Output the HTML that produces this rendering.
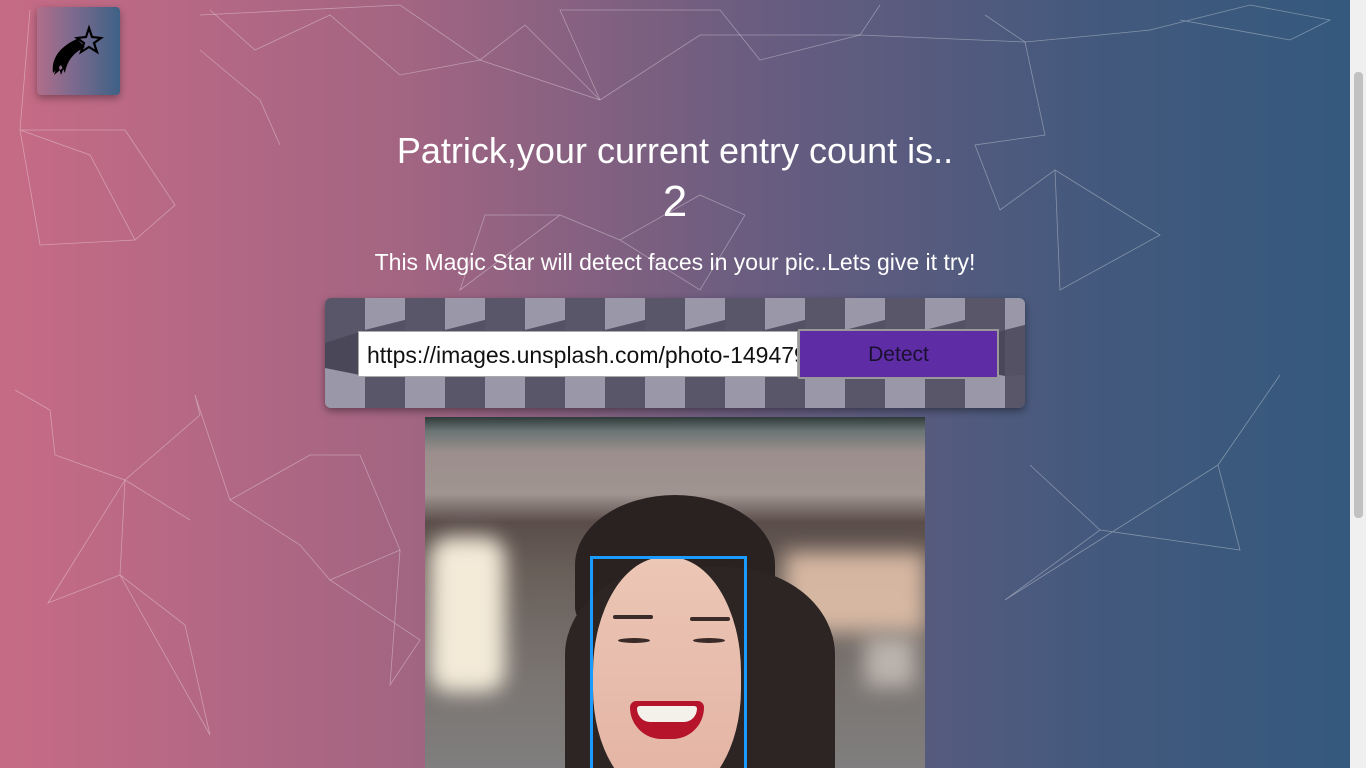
<!DOCTYPE html>
<html><head><meta charset="utf-8"><style>
html,body{margin:0;padding:0;width:1366px;height:768px;overflow:hidden}
body{background:linear-gradient(90deg,#c66b86 0%,#a26582 30%,#6a5d80 55%,#43597d 80%,#33597d 100%);font-family:"Liberation Sans",sans-serif;position:relative}
.sb{position:absolute;right:0;top:0;width:16px;height:768px;background:#f0f0f0}
.sb div{position:absolute;left:4px;top:72px;width:9px;height:446px;background:#c1c1c1;border-radius:4px}
.logo{position:absolute;left:37px;top:7px;width:83px;height:88px;border-radius:4px;background:linear-gradient(90deg,#b06e8a,#7b6a8e 45%,#3e6186);box-shadow:0 3px 8px rgba(0,0,0,.35)}
h1{position:absolute;left:0;width:1350px;text-align:center;top:130px;margin:0;font-weight:normal;color:#fff;font-size:36px;font-family:"Liberation Sans",sans-serif}
.n{position:absolute;left:0;width:1350px;text-align:center;top:177px;color:#fff;font-size:44px;font-family:"Liberation Sans",sans-serif}
.p{position:absolute;left:0;width:1350px;text-align:center;top:249px;color:#fff;font-size:23px;font-family:"Liberation Sans",sans-serif}
.panel{position:absolute;left:325px;top:298px;width:700px;height:110px;border-radius:6px;overflow:hidden;box-shadow:0 3px 8px rgba(0,0,0,.4)}
.inp{position:absolute;left:358px;top:331px;width:430px;height:44px;background:#fff;border:1px solid #aaa;font-size:23px;line-height:46px;padding-left:8px;color:#111;font-family:"Liberation Sans",sans-serif;white-space:nowrap;overflow:hidden}
.btn{position:absolute;left:798px;top:329px;width:197px;height:46px;background:#5e2ca5;border:2px solid #999;text-align:center;line-height:48px;font-size:21px;color:#1a1030;font-family:"Liberation Sans",sans-serif}
.img{position:absolute;left:425px;top:417px;width:500px;height:351px;overflow:hidden;background:linear-gradient(180deg,#2f3a3a 0%,#6a7574 4%,#9b8e8c 10%,#a09490 22%,#5a4d4a 30%,#6a605a 45%,#7a7572 75%,#807e7e 100%)}
.b{position:absolute;filter:blur(10px)}
.box{position:absolute;left:590px;top:556px;width:151px;height:212px;border:3px solid #1a9cff}
</style></head><body>
<svg style="position:absolute;left:0;top:0" width="1350" height="768" stroke="rgba(255,255,255,.35)" stroke-width="0.8" fill="none">
<polyline points="30,10 20,130 40,245 135,240 175,205 125,130 20,130 90,155 135,240"/>
<polyline points="210,10 255,50 330,15 400,75 480,60 525,25 600,100 560,10 720,10 760,60 860,35 880,5"/>
<polyline points="200,15 400,5 480,60 600,100 700,35 860,35 1025,42 1045,135 975,145 1000,210 1055,170 1060,290 1160,235 1055,170"/>
<polyline points="985,15 1025,42 1100,35 1150,30 1250,5 1330,20 1290,40 1180,20"/>
<polyline points="560,215 485,215 460,290 560,215 620,240 700,195 745,215 700,290 620,240"/>
<polyline points="15,390 50,410 55,455 125,480 200,415 195,395 230,500 310,455 360,455 400,550 330,580 300,545 230,500"/>
<polyline points="125,480 120,575 185,625 210,735 120,575 48,603 125,480 190,520"/>
<polyline points="400,550 390,685 420,640 330,580"/>
<polyline points="1280,375 1218,465 1240,550 1100,530 1030,465 1100,530 1005,600 1218,465"/>
<polyline points="280,145 260,100 200,50"/>
</svg>
<div class="logo"><svg width="83" height="88" viewBox="0 0 83 88">
<path d="M16 66 C14 52 22 40 40 32 L48 40 C36 46 30 54 28 66 L24 58 Z" fill="#000"/>
<path d="M17 68 L21 56 L24 68 L27 60 Z" fill="#000"/>
<polygon points="52,21 55,30 64,31 57,36 60,45 52,40 44,45 47,36 40,31 49,30" fill="none" stroke="#000" stroke-width="2.2"/>
</svg></div>
<h1>Patrick,your current entry count is..</h1>
<div class="n">2</div>
<div class="p">This Magic Star will detect faces in your pic..Lets give it try!</div>
<div class="panel"><svg width="700" height="110">
<defs><pattern id="c" width="80" height="110" patternUnits="userSpaceOnUse" x="0" y="0">
<rect width="80" height="110" fill="#4a4858"/>
<polygon points="0,0 40,0 40,32 0,45" fill="#585668"/>
<polygon points="40,0 80,0 80,22 40,32" fill="#9a98a8"/>
<polygon points="40,32 80,22 80,75 40,78" fill="#535163"/>
<polygon points="0,70 40,78 40,110 0,110" fill="#9a98a8"/>
<polygon points="40,78 80,75 80,110 40,110" fill="#585668"/>
</pattern></defs>
<rect width="700" height="110" fill="url(#c)"/></svg></div>
<div class="inp">https://images.unsplash.com/photo-1494790108377</div>
<div class="btn">Detect</div>
<div class="img">
<div class="b" style="left:5px;top:120px;width:75px;height:155px;background:#f3ead8;border-radius:20px"></div>
<div class="b" style="left:360px;top:135px;width:140px;height:80px;background:#e8c6ae;opacity:.85"></div>
<div class="b" style="left:440px;top:220px;width:50px;height:50px;background:#d8d0c8;opacity:.7"></div>
<div style="position:absolute;left:150px;top:78px;width:200px;height:140px;border-radius:50% 50% 20% 20%;background:#2a2220"></div>
<div style="position:absolute;left:140px;top:150px;width:270px;height:220px;border-radius:40% 40% 0 0;background:#2c2523"></div>
<div style="position:absolute;left:168px;top:140px;width:148px;height:240px;border-radius:48% 48% 45% 45%;background:linear-gradient(180deg,#ecc6b6,#e3b3a3)"></div>
<div style="position:absolute;left:188px;top:198px;width:40px;height:4px;background:#3a2a28;border-radius:2px"></div>
<div style="position:absolute;left:265px;top:200px;width:40px;height:4px;background:#3a2a28;border-radius:2px"></div>
<div style="position:absolute;left:193px;top:221px;width:32px;height:5px;background:#3a2a28;border-radius:50%"></div>
<div style="position:absolute;left:268px;top:221px;width:32px;height:5px;background:#3a2a28;border-radius:50%"></div>
<div style="position:absolute;left:205px;top:284px;width:74px;height:38px;border-radius:8px 8px 40px 40px;background:#b5142a"></div>
<div style="position:absolute;left:212px;top:289px;width:60px;height:16px;border-radius:4px 4px 20px 20px;background:#f4f0ea"></div>
</div>
<div class="box"></div>
<div class="sb"><div></div></div>
</body></html>
